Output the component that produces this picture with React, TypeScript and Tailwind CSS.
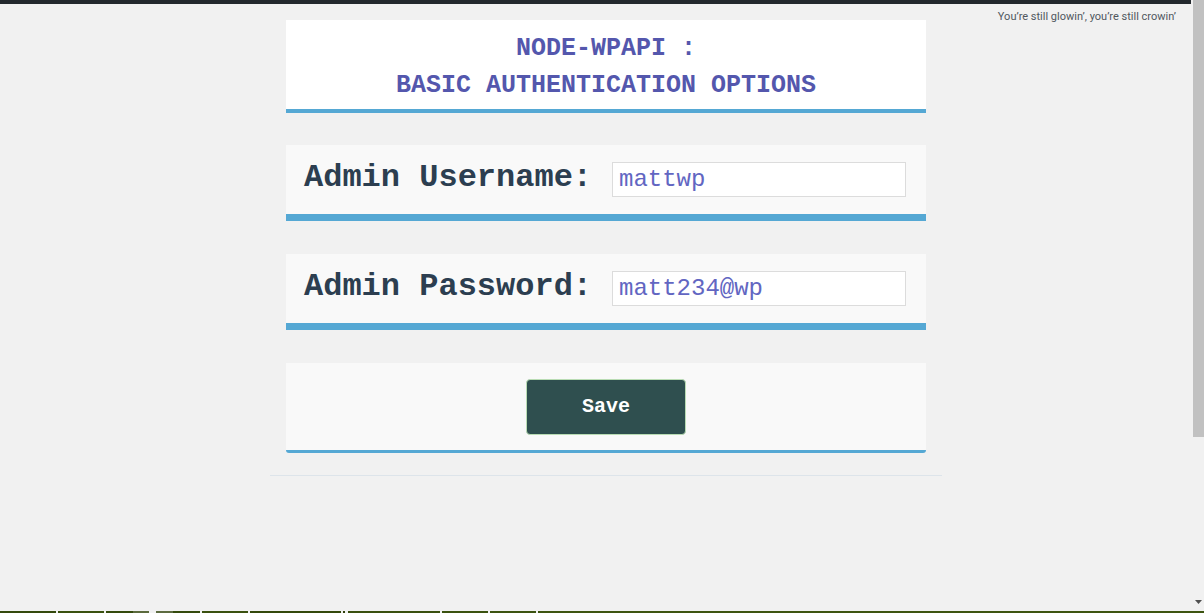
import React from "react";

const mono = { fontFamily: '"Liberation Mono", "Courier New", monospace' };

const segments: Array<[number, number, string]> = [
  [0, 56, "#34490c"],
  [58, 104, "#3a510f"],
  [106, 133, "#344a0c"],
  [133, 149, "#5b6a3c"],
  [156, 173, "#5d6b40"],
  [173, 200, "#344a0c"],
  [202, 248, "#3a510f"],
  [250, 341, "#33480b"],
  [343, 345, "#2f3f0c"],
  [348, 440, "#3a500f"],
  [442, 488, "#3b520f"],
  [490, 536, "#3c5310"],
  [538, 1204, "#3d5410"],
];

function Field({ label, value, first }: { label: string; value: string; first?: boolean }) {
  return (
    <div
      className={
        (first ? "mt-[32px] " : "mt-[33px] ") +
        "flex h-[76px] items-center justify-between border-b-[7px] border-[#55a8d4] bg-[#f9f9f9] pl-[18px] pr-[20px]"
      }
    >
      <label
        className="mt-[-3px] text-[32px] font-bold leading-[40px] text-[#2c3e50]"
        style={mono}
      >
        {label}
      </label>
      <input
        readOnly
        value={value}
        className="h-[35px] w-[294px] border border-[#dcdcdc] bg-white px-[6px] text-[24px] text-[#6266c2] outline-none"
        style={mono}
      />
    </div>
  );
}

export default function App() {
  return (
    <div className="flex h-[613px] w-[1204px] flex-col overflow-hidden bg-[#f1f1f1]">
      <div className="flex min-h-0 flex-1">
        <div className="w-[1191px]">
          <div className="h-[4px] bg-[#23282d]" />
          <div>
            <p
              className="float-right pr-[15px] pt-[5px] text-[11px] leading-[16px] text-[#50575e]"
              style={{ fontFamily: 'Roboto, "Noto Sans", sans-serif' }}
            >
              You’re still glowin’, you’re still crowin’
            </p>
            <div className="ml-[270px] w-[672px] pt-[16px]">
              <div className="mx-[16px] w-[640px]">
                <div className="border-b-4 border-[#55a8d4] bg-white pb-[5px] pt-[10px] text-center">
                  <h1
                    className="text-[25px] font-bold leading-[37px] text-[#5457ad]"
                    style={mono}
                  >
                    NODE-WPAPI :
                    <br />
                    BASIC AUTHENTICATION OPTIONS
                  </h1>
                </div>
                <Field label="Admin Username:" value="mattwp" first />
                <Field label="Admin Password:" value="matt234@wp" />
                <div className="mt-[33px] flex h-[90px] items-start justify-center rounded-b-[3px] border-b-[3px] border-[#55a8d4] bg-[#f9f9f9] pt-[16px]">
                  <button
                    className="h-[56px] w-[160px] rounded-[4px] border border-[#b9dcb4] bg-[#2f4f4f] text-[20px] font-bold text-white"
                    style={mono}
                  >
                    Save
                  </button>
                </div>
              </div>
              <div className="mt-[22px] h-px bg-[#dde4ea]" />
            </div>
          </div>
        </div>
        <div className="flex w-[13px] flex-col bg-[#f1f1f1]">
          <div className="ml-[2px] h-[437px] bg-[#c1c1c1]" />
          <div className="flex flex-1 items-end justify-center pb-[7px] pl-[2px]">
            <svg width="7" height="4" viewBox="0 0 7 4">
              <polygon points="0,0 7,0 3.5,4" fill="#505050" />
            </svg>
          </div>
        </div>
      </div>
      <div className="relative h-[2px] w-[1204px] bg-[#f1f1f1]">
        <div className="flex h-[2px]">
          {segments.map(([a, b, c], i) => {
            const prev = i === 0 ? 0 : segments[i - 1][1];
            return (
              <div
                key={i}
                className="h-[2px]"
                style={{ marginLeft: a - prev, width: b - a, background: c }}
              />
            );
          })}
        </div>
      </div>
    </div>
  );
}
